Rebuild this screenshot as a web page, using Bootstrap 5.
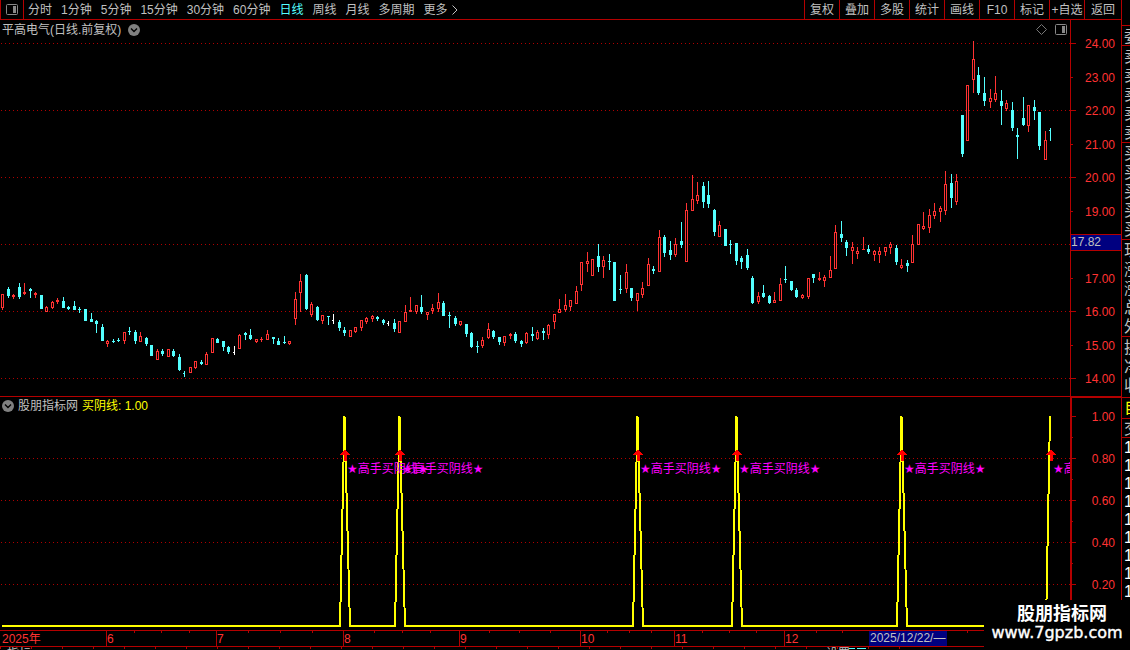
<!DOCTYPE html>
<html lang="zh-CN">
<head>
<meta charset="utf-8">
<meta name="viewport" content="width=device-width, initial-scale=1">
<title>平高电气 日线</title>
<link href="https://cdn.jsdelivr.net/npm/bootstrap@5.3.0/dist/css/bootstrap.min.css" rel="stylesheet">
<style>
:root{--line:#b40000;--txt:#c0c0c0;--up:#ff3232;--down:#54ffff}
body{background:#000;color:var(--txt);font:12px/18px "Liberation Sans","Noto Sans CJK SC",sans-serif;height:100vh}
button{background:none;border:0;padding:0;color:inherit;white-space:nowrap}
svg{display:block}
svg text{font-size:12px}
.toolbar{height:20px;border-bottom:1px solid var(--line)}
.toggle-cell{width:24px;border-left:1px solid var(--line);border-right:1px solid var(--line)}
.periods{gap:9px;padding-left:4px}
.periods .on{color:var(--down)}
.tools button{width:35px;border-left:1px solid var(--line)}
.tools button:last-child{width:37px}
.price-pane{height:376px}
.signal-pane{height:234px;border-top:1px solid var(--line)}
.scale{width:51px;border-left:1px solid var(--line)}
.signal-pane .scale{border-left-width:2px;border-top:1px solid var(--line)}
.caption-bar{top:0;left:2px;height:18px}
.price-pane .caption-bar{height:20px;gap:7px}
.caption-icons{top:4px;right:3px}
.time-axis{height:17px;border-top:1px solid var(--line);border-bottom:1px solid var(--line)}
.footer-strip{height:3px}
.quote{width:9px;border-left:1px solid var(--line);padding-top:25px;font-size:16px}
.quote div{border-top:1px solid var(--line);padding-left:2px}
.quote .rows{padding-bottom:1px}
.quote .rows-end{padding-bottom:3px}
.quote span{display:block;width:20px;height:19px;line-height:22px}
.quote .deal span{height:18px;line-height:20px}
.quote .ticks span{height:18px;line-height:20px;color:#fff}
.quote .tab-cell span{height:20px;line-height:20px;color:#ff0}
.watermark{right:0;bottom:0;width:146px;height:50px;background:#000;color:#fff;padding-top:4px;line-height:20px}
.watermark b{font-size:18px;padding-left:10px}
.watermark a{font:16px/18px "DejaVu Sans",sans-serif;color:#fff;-webkit-text-stroke:.4px #fff}
</style>
<script src="https://cdn.jsdelivr.net/npm/bootstrap@5.3.0/dist/js/bootstrap.bundle.min.js"></script>
</head>
<body class="d-flex overflow-hidden position-relative">
<main class="flex-grow-1 d-flex flex-column overflow-hidden">
  <nav class="toolbar d-flex flex-shrink-0" aria-label="周期">
    <button class="toggle-cell d-flex align-items-center justify-content-center" aria-label="面板">
      <svg width="12" height="11"><rect x=".5" y=".5" width="11" height="10" rx="1" fill="none" stroke="#888"/><path d="M7 2h3v7H7z" fill="#888"/></svg>
    </button>
    <div class="periods d-flex flex-grow-1">
      <button>分时</button><button>1分钟</button><button>5分钟</button><button>15分钟</button><button>30分钟</button><button>60分钟</button><button class="on">日线</button><button>周线</button><button>月线</button><button>多周期</button>
      <button class="d-flex align-items-center gap-1">更多<svg width="6" height="10"><path d="M.5 .5L5 5L.5 9.500" fill="none" stroke="#c0c0c0"/></svg></button>
    </div>
    <div class="tools d-flex">
      <button>复权</button><button>叠加</button><button>多股</button><button>统计</button><button>画线</button><button>F10</button><button>标记</button><button>+自选</button><button>返回</button>
    </div>
  </nav>

  <section class="price-pane d-flex flex-shrink-0">
    <div class="flex-grow-1 position-relative overflow-hidden">
      <svg id="price" width="100%" height="376" shape-rendering="crispEdges"></svg>
      <div class="caption-bar position-absolute d-flex align-items-center">
        <span>平高电气(日线.前复权)</span>
        <button aria-label="展开"><svg width="12" height="12"><circle cx="6" cy="6" r="6" fill="#808080"/><path d="M3 4.500L6 7.500L9 4.500" fill="none" stroke="#000" stroke-width="1.400"/></svg></button>
      </div>
      <div class="caption-icons position-absolute d-flex align-items-center gap-2">
        <svg width="11" height="11"><path d="M5.500 .5l5 5l-5 5l-5-5z" fill="none" stroke="#777"/></svg>
        <svg width="12" height="11"><rect x=".5" y=".5" width="11" height="10" rx="1" fill="none" stroke="#888"/><path d="M7 2h3v7H7z" fill="#888"/></svg>
      </div>
    </div>
    <div class="scale flex-shrink-0"><svg id="priceScale" width="50" height="376" shape-rendering="crispEdges"></svg></div>
  </section>

  <section class="signal-pane d-flex flex-shrink-0">
    <div class="flex-grow-1 position-relative overflow-hidden">
      <svg id="signal" width="100%" height="233" shape-rendering="crispEdges"></svg>
      <div class="caption-bar position-absolute d-flex align-items-center">
        <button aria-label="展开"><svg width="12" height="12"><circle cx="6" cy="6" r="6" fill="#808080"/><path d="M3 4.500L6 7.500L9 4.500" fill="none" stroke="#000" stroke-width="1.400"/></svg></button>
        <span class="ms-1 me-1">股朋指标网</span><span style="color:#ff0">买阴线: 1.00</span>
      </div>
    </div>
    <div class="scale flex-shrink-0"><svg id="signalScale" width="49" height="232" shape-rendering="crispEdges"></svg></div>
  </section>

  <div class="time-axis flex-shrink-0"><svg id="months" width="100%" height="15" shape-rendering="crispEdges"></svg></div>
  <div class="footer-strip flex-shrink-0 overflow-hidden"><svg id="strip" width="100%" height="3" shape-rendering="crispEdges"></svg></div>
</main>

<aside class="quote flex-shrink-0 overflow-hidden">
  <div><span>委</span></div>
  <div class="rows"><span>卖</span><span>卖</span><span>卖</span><span>卖</span><span>卖</span></div>
  <div class="rows"><span>买</span><span>买</span><span>买</span><span>买</span><span>买</span></div>
  <div class="rows"><span>现</span><span>涨</span><span>涨</span><span>总</span><span>外</span></div>
  <div class="rows-end"><span>换</span><span>净</span><span>收</span></div>
  <div class="tab-cell"><span>自</span></div>
  <div class="deal"><span>交</span></div>
  <div class="ticks"><span>1</span><span>1</span><span>1</span><span>1</span><span>1</span><span>1</span><span>1</span><span>1</span><span>1</span></div>
</aside>

<div class="watermark position-absolute d-flex flex-column align-items-center"><b>股朋指标网</b><a class="text-decoration-none" href="#">www.7gpzb.com</a></div>

<script>
// Each bar: x, high, body top, body bottom, low, kind (R rising, C falling, W unchanged)
const bars = `2 294 294 308 310 R;8 287 289 296 298 C;13 294 295 297 299 R;19 283 287 297 299 C;24 283 292 294 295 R;30 288 289 291 298 C;35 292 293 295 298 R;41 295 295 309 309 C;46 306 307 312 312 R;52 301 302 308 309 R;57 298 300 302 304 R;63 297 301 308 308 C;68 306 307 309 310 C;74 301 306 310 310 C;79 307 309 310 313 C;85 309 309 321 321 C;91 313 319 322 322 C;96 320 321 324 333 C;102 324 327 341 341 C;107 340 341 344 347 R;113 339 341 342 343 C;118 338 340 341 342 C;124 332 332 341 344 R;129 327 331 332 335 C;135 330 332 341 344 C;140 332 336 342 342 R;146 337 338 344 346 C;151 345 345 356 356 C;157 349 351 360 360 R;162 349 351 354 356 C;168 349 349 357 357 R;173 349 351 356 357 C;179 354 357 370 371 C;184 371 373 374 377 C;190 367 367 373 373 R;195 361 361 368 369 R;201 360 362 364 365 C;206 352 354 365 365 R;212 338 338 353 353 R;217 338 339 343 343 C;223 341 341 347 351 C;228 346 347 352 354 C;234 346 352 353 355 W;239 334 335 349 349 R;245 332 333 335 340 C;250 329 335 339 340 C;256 339 339 342 343 R;261 337 339 340 342 R;267 330 334 340 340 R;273 337 337 339 344 C;278 338 341 345 345 C;284 336 342 343 344 C;289 341 341 344 345 R;295 292 299 319 325 R;300 274 281 293 312 R;306 274 275 309 310 C;311 302 304 315 317 R;317 306 307 320 321 C;322 315 315 321 324 R;328 316 316 317 325 C;333 314 320 321 324 W;339 320 322 328 331 C;344 327 330 333 336 C;350 330 330 337 337 R;355 327 327 332 333 R;361 320 320 328 331 R;366 317 318 322 324 R;372 315 316 319 322 R;377 316 317 319 321 C;383 319 320 323 325 C;388 321 323 324 326 W;394 319 323 329 332 C;399 321 321 333 333 R;405 305 312 322 322 R;410 297 310 312 312 R;416 305 305 312 314 R;421 295 307 312 314 C;427 312 312 315 320 R;432 304 308 311 314 R;438 293 302 309 312 R;443 301 303 316 316 C;449 312 315 316 328 C;455 316 318 324 326 C;460 321 321 325 326 R;466 324 324 334 337 C;471 332 333 347 348 C;477 341 346 347 353 C;482 337 340 346 348 R;488 323 329 338 339 R;493 330 331 337 339 C;499 337 337 342 345 C;504 336 336 343 346 R;510 333 334 336 339 R;515 332 334 341 343 C;521 340 341 344 347 C;526 332 333 343 344 R;532 327 334 336 341 C;537 330 332 339 340 R;543 328 331 333 340 C;548 324 325 335 339 R;554 314 314 322 329 R;559 299 309 313 313 R;565 294 305 310 312 R;570 300 300 307 311 R;576 286 291 304 304 R;581 262 262 285 291 R;587 252 261 264 272 R;592 259 259 276 276 R;598 244 256 267 272 C;603 256 260 267 278 R;609 254 261 262 270 C;614 262 262 301 301 C;620 275 289 290 294 C;626 264 272 289 293 R;631 288 288 298 301 C;637 293 293 301 311 R;642 282 288 295 298 R;648 258 264 286 286 R;653 266 269 271 274 C;659 230 237 272 272 R;664 235 237 253 257 C;670 241 250 255 260 C;675 238 244 255 257 R;681 222 241 245 248 C;686 203 210 262 262 R;692 175 199 211 211 R;697 182 195 201 204 R;703 182 186 202 208 C;708 181 195 204 208 C;714 209 210 232 236 C;719 221 225 237 237 R;725 229 229 246 246 C;730 240 244 245 254 C;736 243 243 261 265 C;741 256 258 262 269 C;747 249 255 268 270 C;752 276 278 303 304 C;758 292 296 302 304 R;763 285 293 297 298 C;769 295 296 303 304 C;774 292 300 303 303 R;780 278 284 301 301 R;785 266 279 280 283 C;791 281 281 290 291 C;796 288 290 297 298 C;802 294 295 298 299 R;808 278 278 297 299 R;813 274 274 278 283 C;819 272 278 280 281 R;824 275 277 281 287 R;830 256 270 278 278 R;835 225 232 269 269 R;841 221 234 238 242 C;846 240 242 248 256 C;852 242 247 251 264 R;857 247 251 254 259 R;863 237 249 250 250 R;868 245 249 252 254 C;874 250 251 255 261 R;879 247 251 255 263 R;885 247 247 252 256 R;890 242 244 248 254 R;896 245 248 262 265 C;901 259 265 268 269 R;907 260 263 266 272 C;912 235 244 263 263 R;918 224 224 245 245 R;923 212 226 229 230 R;929 209 215 228 233 R;934 203 211 216 219 R;940 206 208 212 222 R;945 171 184 211 215 R;951 174 183 198 208 C;956 174 181 202 205 R;962 115 115 154 157 C;967 85 85 141 141 R;973 41 59 80 93 R;978 67 75 93 95 C;984 77 93 101 106 C;990 89 98 102 108 R;995 76 93 100 102 R;1001 90 101 106 125 C;1006 100 103 109 111 R;1012 102 110 128 131 C;1017 128 135 137 159 C;1023 97 118 125 126 C;1028 105 105 126 132 R;1034 100 107 111 120 C;1039 112 112 146 150 C;1045 131 140 160 160 R;1050 128 130 131 141 C`;
const colour = {R:'#ff3232', C:'#54ffff', W:'#fff'};
const rect = (x,y,w,h,f) => `<rect x="${x}" y="${y}" width="${w}" height="${h}" fill="${f}"/>`;
const dots = y => `<line x1="1" x2="100%" y1="${y+.5}" y2="${y+.5}" stroke="#b00000" stroke-dasharray="1 3"/>`;
const put = (id, s) => document.getElementById(id).innerHTML = s;

let s = '<g transform="translate(0,-20)">' + [43,110,177,244,311,378].map(dots).join('');
for (const b of bars.split(';')) {
  const p = b.split(' '), [x,hi,top,bot,lo] = p.map(Number), c = colour[p[5]];
  s += rect(x,hi,1,lo-hi,c);
  if (p[5] === 'W' || x === 1050 || x === 184) s += rect(x-1,top,2,bot-top,c);
  else s += rect(x-1,top,3,bot-top,c);
  if (p[5] === 'R' && bot-top > 2) s += rect(x,top+1,1,bot-top-2,'#000');
}
put('price', s + '</g>');

s = '<g transform="translate(0,-20)">';
[[24,43],[23,77],[22,110],[21,144],[20,177],[19,211],[17,278],[16,311],[15,345],[14,378]].forEach(([v,y]) => {
  const major = v % 2 === 0;
  s += rect(0,y,major?5:2,1,'#b40000') + `<text x="44" y="${y+5}" text-anchor="end" fill="#ff3232">${v}.00</text>`;
});
s += rect(0,234,50,17,'#b40000') + rect(0,235,50,15,'#000080') + '<text x="0" y="246" fill="#c0c0c0">17.82</text></g>';
put('priceScale', s);

const peaks = [344,399,637,736,901,1050];
let line = '2,626 ';
peaks.forEach(x => line += x === 1050 ? `${x-4},626 ${x},416` : `${x-4},626 ${x+.5},416 ${x+6},626 `);
s = '<g transform="translate(0,-397)">' + [458,500,542,584].map(dots).join('');
s += `<polyline points="${line}" fill="none" stroke="#ff0" stroke-width="2" stroke-linejoin="bevel"/>`;
peaks.forEach(x => {
  s += `<path d="M${x+1} 449l5 6h-3v6h-3v-6h-4z" fill="#f00"/>`;
  s += `<text x="${x+3}" y="473" fill="#f0f" font-family="DejaVu Sans, Noto Sans CJK SC, sans-serif">★高手买阴线★</text>`;
});
put('signal', s + '</g>');

s = '<g transform="translate(0,-398)">';
[['1.00',416],['0.80',458],['0.60',500],['0.40',542],['0.20',584]].forEach(([v,y]) => {
  s += rect(0,y,4,1,'#b40000') + rect(0,y+21,1,1,'#b40000') + `<text x="43" y="${y+5}" text-anchor="end" fill="#ff3232">${v}</text>`;
});
put('signalScale', s + '</g>');

s = '';
[[0,'2025年'],[106,'6'],[216,'7'],[343,'8'],[459,'9'],[580,'10'],[674,'11'],[784,'12']].forEach(([x,t]) => {
  s += (x ? rect(x,0,1,15,'#b40000') : '') + `<text x="${x ? x+1 : 2}" y="12" fill="#ff3232">${t}</text>`;
});
[134,161,189,248,280,312,374,402,430,489,519,550,607,629,651,702,729,756,816,842,967].forEach(x => s += rect(x,0,1,2,'#b40000'));
s += rect(869,0,78,15,'#000080') + '<text x="870" y="11" fill="#c0c0c0">2025/12/22/—</text>';
put('months', s);

s = '';
for (let x = 0; x < 900; x += 31) s += rect(x,0,1,2,'#b40000');
s += '<text x="7" y="11" fill="#c0c0c0">指标</text><text x="826" y="11" fill="#c0c0c0">设置</text>' + rect(849,1,6,1,'#54ffff') + rect(857,1,9,1,'#54ffff');
put('strip', s);
</script>
</body>
</html>
